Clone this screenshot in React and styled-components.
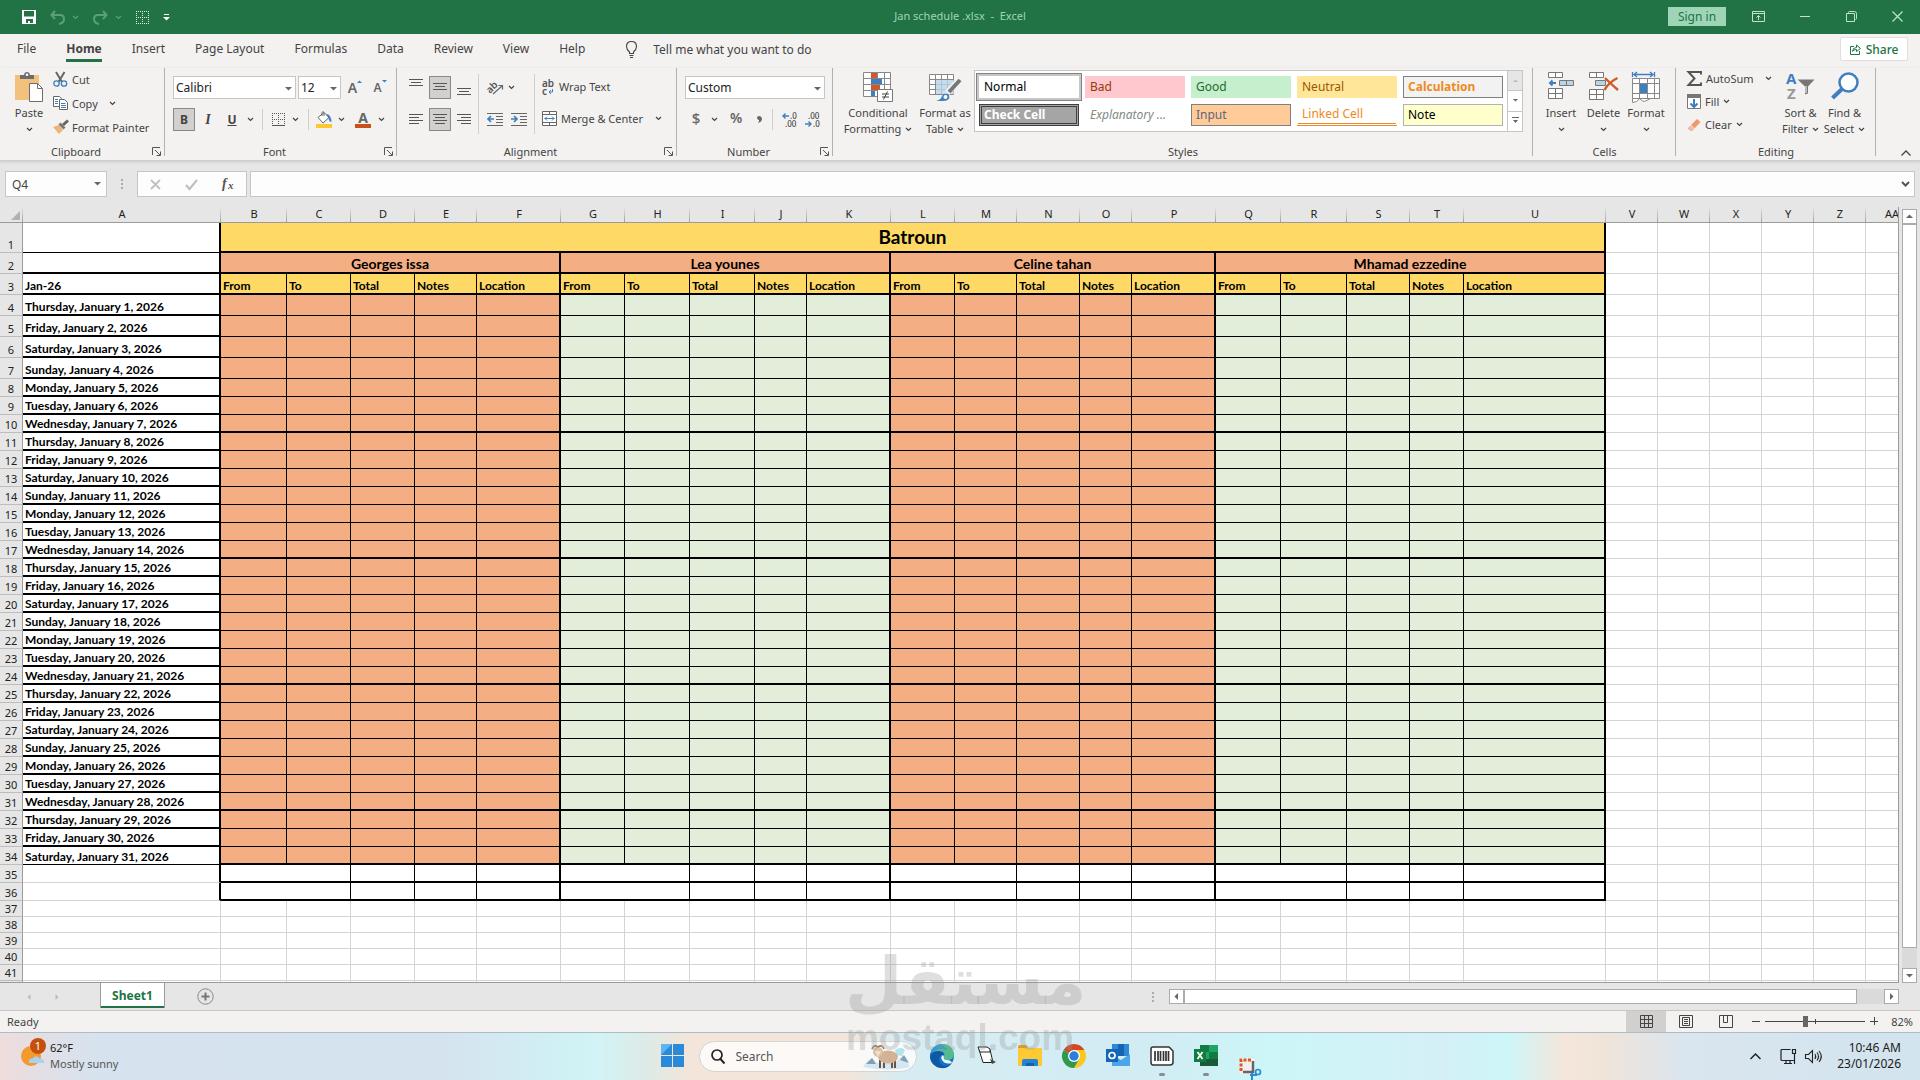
import React from "react";
import styled, { createGlobalStyle, css } from "styled-components";

const UI = '"Noto Sans", "Open Sans", sans-serif';
const CELL = 'Lato, "Noto Sans", sans-serif';
const INK = "#444";

const GlobalStyle = createGlobalStyle`
  * { box-sizing: border-box; }
  body { margin: 0; font-family: ${UI}; font-size: 11px; color: ${INK}; overflow: hidden; }
  button, input, select { font: inherit; color: inherit; }
  button { background: none; border: 0; padding: 0; }
  svg { display: block; flex: none; overflow: visible; }
`;

const Screen = styled.div`
  height: 100vh;
  display: flex;
  flex-direction: column;
  background: #e6e6e6;
`;

/* ---------- title bar ---------- */
const TitleBar = styled.header`
  height: 34px;
  flex: none;
  display: grid;
  grid-template-columns: 1fr auto 1fr;
  align-items: center;
  background: #217346;
  color: #9fd5b7;
`;
const QuickAccess = styled.div`
  display: flex;
  align-items: center;
  gap: 7px;
  padding-left: 22px;
`;
const QuickGroup = styled.div`
  display: flex;
  align-items: center;
  gap: 7px;
  margin-left: 7px;
  opacity: ${(p) => (p.$dim ? 0.45 : 1)};
`;
const DocTitle = styled.h1`
  margin: 0;
  font-size: 11px;
  font-weight: 400;
  line-height: 32px;
  white-space: pre;
  align-self: start;
`;
const WindowTools = styled.div`
  display: flex;
  align-items: center;
  justify-content: flex-end;
  gap: 35px;
  padding-right: 17px;
  align-self: start;
  height: 33px;
`;
const SignIn = styled.button`
  width: 58px;
  height: 19px;
  margin-right: -9px;
  background: #9fd5b7;
  color: #217346;
  font-size: 12px;
  line-height: 19px;
`;

/* ---------- tabs ---------- */
const TabRow = styled.nav`
  height: 34px;
  flex: none;
  display: flex;
  align-items: flex-start;
  background: #f3f2f1;
  padding: 3px 12px 0 2px;
`;
const Tab = styled.button`
  padding: 0 15px;
  font-size: 12px;
  font-weight: ${(p) => (p.$active ? 700 : 400)};
  span {
    display: block;
    height: 25px;
    line-height: 24px;
    box-shadow: ${(p) => (p.$active ? "inset 0 -3px #217346" : "none")};
  }
`;
const TellMe = styled.button`
  display: flex;
  align-items: center;
  gap: 16px;
  height: 25px;
  margin-left: 26px;
  font-size: 12px;
`;
const Share = styled.button`
  display: flex;
  align-items: center;
  justify-content: center;
  gap: 5px;
  margin-left: auto;
  width: 68px;
  height: 24px;
  background: #fff;
  border: 1px solid #e1dfdd;
  border-radius: 2px;
  color: #217346;
  font-size: 12px;
  font-weight: 500;
`;

/* ---------- ribbon ---------- */
const Ribbon = styled.section`
  flex: none;
  height: 93px;
  display: flex;
  background: #f3f2f1;
  border-bottom: 1px solid #cfcec9;
  box-shadow: 0 1px 3px rgba(0, 0, 0, 0.12);
`;
const Group = styled.div`
  display: flex;
  flex-direction: column;
  height: 92px;
  width: ${(p) => (p.$w ? p.$w + "px" : "auto")};
  flex: ${(p) => (p.$grow ? "1 1 0" : "none")};
  background: linear-gradient(#b3b1ae, #b3b1ae) right top / 1px 88px no-repeat;
`;
const GroupBody = styled.div`
  flex: 1;
  display: flex;
  padding: ${(p) => p.$pad || "0"};
  gap: ${(p) => p.$gap || 0}px;
`;
const GroupLabel = styled.div`
  height: 17px;
  display: flex;
  align-items: center;
  padding-right: ${(p) => (p.$launcher ? 4 : 0)}px;
  font-size: 11px;
  line-height: 17px;
  span { flex: 1; text-align: center; }
`;
const Stack = styled.div`
  display: flex;
  flex-direction: column;
  gap: ${(p) => p.$gap || 0}px;
  padding-top: ${(p) => p.$top || 0}px;
  margin-left: ${(p) => p.$left || 0}px;
`;
const Line = styled.div`
  display: flex;
  align-items: center;
  height: 23px;
  gap: ${(p) => p.$gap || 0}px;
`;
const SmallButton = styled.button`
  display: flex;
  align-items: center;
  height: ${(p) => p.$h || 23}px;
  padding-bottom: 2px;
  gap: 4px;
  white-space: nowrap;
  span + svg { margin-left: ${(p) => p.$arrow || 0}px; }
`;
const BigButton = styled.button`
  display: flex;
  flex-direction: column;
  align-items: center;
  width: ${(p) => p.$w}px;
  padding-top: 4px;
  line-height: 16px;
  white-space: nowrap;
`;
const BigIcon = styled.span`
  height: 33px;
  display: flex;
  align-items: flex-start;
`;
const BigLine = styled.span`
  height: 16px;
  display: flex;
  align-items: center;
  gap: 4px;
`;
const Toggle = styled.button`
  width: ${(p) => p.$w || 22}px;
  height: 23px;
  display: flex;
  align-items: center;
  justify-content: center;
  background: ${(p) => (p.$on ? "#d2d0ce" : "transparent")};
  border: 1px solid ${(p) => (p.$on ? "#8a8886" : "transparent")};
  font-size: 12px;
  font-weight: ${(p) => (p.$bold ? 700 : 400)};
`;
const Italic = styled.em`
  font: italic 700 14px/20px "Liberation Serif", serif;
`;
const Divider = styled.i`
  width: 1px;
  height: ${(p) => p.$h || 21}px;
  background: #d0cecc;
  margin: 0 ${(p) => p.$m || 0}px;
`;
const SelectWrap = styled.label`
  position: relative;
  display: block;
  width: ${(p) => p.$w}px;
  height: 23px;
  svg { position: absolute; right: 4px; top: 9px; pointer-events: none; }
`;
const Select = styled.select`
  appearance: none;
  width: 100%;
  height: 23px;
  padding: 0 14px 0 2px;
  border: 1px solid #c8c6c4;
  border-radius: 0;
  background: #fff;
  color: #222;
  font-size: 12px;
  line-height: 20px;
`;

/* ---------- style gallery ---------- */
const Gallery = styled.div`
  display: flex;
  height: 62px;
  margin-top: 2px;
  flex: none;
  border: 1px solid #c8c6c4;
  background: #fff;
`;
const GalleryGrid = styled.div`
  display: grid;
  grid-template-columns: repeat(5, 100px);
  grid-auto-rows: 22px;
  gap: 6px;
  padding: 5px 4px;
`;
const Swatch = styled.button`
  text-align: left;
  padding-left: 4px;
  font-size: 12px;
  line-height: 18px;
  white-space: nowrap;
  background: ${(p) => p.$bg || "#fff"};
  color: ${(p) => p.$fg || "#000"};
  font-weight: ${(p) => (p.$bold ? 700 : 400)};
  font-style: ${(p) => (p.$italic ? "italic" : "normal")};
  border: 1px solid ${(p) => p.$line || "transparent"};
  ${(p) => p.$selected && css`outline: 1px solid #838383; outline-offset: 2px; box-shadow: 0 0 0 2px #c6c6c6;`}
  ${(p) => p.$double && css`border: 3px double #3f3f3f; line-height: 14px; padding-left: 2px;`}
  ${(p) => p.$under && css`border-bottom: 3px double #e88a2a;`}
`;
const GalleryScroll = styled.div`
  width: 15px;
  display: flex;
  flex-direction: column;
  border-left: 1px solid #c8c6c4;
  button {
    flex: 1;
    display: flex;
    align-items: center;
    justify-content: center;
  }
  button + button { border-top: 1px solid #c8c6c4; }
  button:first-child { background: #e6e6e6; }
`;
const Collapse = styled.button`
  align-self: flex-end;
  margin: 0 9px 4px auto;
`;

/* ---------- formula bar ---------- */
const FormulaBar = styled.div`
  flex: none;
  display: flex;
  align-items: center;
  height: 46px;
  padding: 10px 5px;
`;
const NameBox = styled(SelectWrap)`
  height: 26px;
  svg { right: 6px; top: 9px; }
  input {
    width: 100%;
    height: 26px;
    border: 1px solid #c6c6c6;
    background: #fdfdfd;
    padding: 0 6px;
    font-size: 12px;
  }
`;
const Dots = styled.span`
  display: flex;
  flex-direction: column;
  gap: 2px;
  width: 2px;
  margin: ${(p) => p.$m};
  i { width: 2px; height: 2px; background: #ababab; }
`;
const FormulaTools = styled.div`
  display: flex;
  align-items: center;
  justify-content: space-between;
  width: 110px;
  height: 26px;
  padding: 0 12px;
  margin-right: 3px;
  background: #fdfdfd;
  border: 1px solid #c6c6c6;
`;
const FormulaInput = styled.label`
  flex: 1;
  height: 26px;
  display: flex;
  align-items: center;
  background: #fdfdfd;
  border: 1px solid #c6c6c6;
  padding-right: 4px;
  input { flex: 1; border: 0; background: none; height: 22px; outline: 0; }
`;

/* ---------- sheet ---------- */
const SheetArea = styled.main`
  flex: 1;
  min-height: 0;
  display: flex;
`;
const SheetView = styled.div`
  flex: 1;
  min-width: 0;
  overflow: hidden;
  border-right: 1px solid #9b9b9b;
  border-bottom: 1px solid #9b9b9b;
  background: #fff;
`;
const Sheet = styled.table`
  table-layout: fixed;
  border-collapse: separate;
  border-spacing: 0;
  width: 1918px;
  font-family: ${CELL};
  font-size: 12px;
  color: #000;
  th, td { padding: 0; overflow: hidden; white-space: nowrap; }
`;
const ColHead = styled.th`
  height: 16px;
  font: 400 11px/14px ${UI};
  color: #222;
  vertical-align: top;
  background: linear-gradient(#e6e6e6, #a0a0a0) right / 1px 100% no-repeat, #e6e6e6;
  border-bottom: 1px solid #9b9b9b;
`;
const Corner = styled(ColHead)`
  svg { margin: 4px 3px 0 auto; }
`;
const RowHead = styled.th`
  height: ${(p) => p.$h}px;
  font: 400 11px/15px ${UI};
  color: #222;
  vertical-align: bottom;
  background: #e6e6e6;
  border-right: 1px solid #9b9b9b;
  border-bottom: 1px solid #bdbdbd;
`;
const lineOf = (v) => (v === 2 ? "2px solid #000" : v === 1 ? "1px solid #000" : "1px solid #d4d4d4");
const Cell = styled.td`
  background: ${(p) => p.$bg || "#fff"};
  border-right: ${(p) => lineOf(p.$r)};
  border-bottom: ${(p) => lineOf(p.$b)};
  text-align: ${(p) => (p.$center ? "center" : "left")};
  vertical-align: ${(p) => (p.$middle ? "middle" : "bottom")};
  font-size: ${(p) => p.$size || 12}px;
  line-height: ${(p) => (p.$size > 14 ? 24 : p.$size ? 17 : 15)}px;
  font-weight: 700;
  && { padding-left: ${(p) => (p.$center ? 0 : 2)}px; }
`;

const VScroll = styled.div`
  width: 15px;
  margin: 2px 3px 0;
  display: flex;
  flex-direction: column;
  background: #dadada;
`;
const ScrollBtn = styled.button`
  width: 15px;
  height: 15px;
  flex: none;
  display: flex;
  align-items: center;
  justify-content: center;
  background: #fff;
  border: 1px solid #ababab;
`;
const VThumb = styled.div`
  flex: 1;
  margin-bottom: 20px;
  background: #fff;
  border: 1px solid #ababab;
`;

/* ---------- sheet tabs ---------- */
const SheetTabs = styled.div`
  flex: none;
  height: 27px;
  display: flex;
  align-items: center;
  padding-right: 21px;
`;
const Arrows = styled.div`
  display: flex;
  gap: 22px;
  width: 100px;
  padding-left: 26px;
`;
const SheetTab = styled.button`
  align-self: flex-start;
  width: 65px;
  height: 25px;
  background: #fff;
  border: solid #9b9b9b;
  border-width: 0 1px;
  box-shadow: inset 0 -2px #217346;
  color: #217346;
  font-size: 12px;
  font-weight: 700;
`;
const AddSheet = styled.button`
  margin-left: 32px;
`;
const HScroll = styled.div`
  display: flex;
  width: 730px;
  height: 15px;
  background: #dadada;
`;
const HThumb = styled.div`
  flex: 1;
  margin-right: 27px;
  background: #fff;
  border: 1px solid #ababab;
`;

/* ---------- status bar ---------- */
const StatusBar = styled.footer`
  flex: none;
  height: 22px;
  display: flex;
  align-items: center;
  background: #f3f2f1;
  border-top: 1px solid #c6c6c6;
  padding: 0 7px;
`;
const ViewBtn = styled.button`
  width: 40px;
  height: 21px;
  display: flex;
  align-items: center;
  justify-content: center;
  background: ${(p) => (p.$on ? "#d2d0ce" : "none")};
`;
const Spacer = styled.div`
  flex: 1;
`;
const Zoom = styled.input`
  appearance: none;
  width: 100px;
  height: 13px;
  margin: 0 5px;
  background:
    linear-gradient(${INK}, ${INK}) center / 1px 5px no-repeat,
    linear-gradient(${INK}, ${INK}) center / 100% 1px no-repeat;
  &::-webkit-slider-thumb {
    appearance: none;
    width: 5px;
    height: 11px;
    background: #666;
  }
`;
const ZoomValue = styled.output`
  width: 34px;
  text-align: right;
`;

/* ---------- taskbar ---------- */
const Taskbar = styled.footer`
  flex: none;
  height: 48px;
  display: grid;
  grid-template-columns: 1fr auto 1fr;
  border-top: 1px solid #aebcc4;
  color: #1b1b1b;
  background: linear-gradient(90deg, #f0dcdc 0, #e3dfe4 2%, #d6e3ee 5%, #d5e3ee 23%, #d0f0f4 29%, #d2f4f6 31%, #dcebe8 33.5%, #f3e5d9 36%, #f3e5d9 44%, #d6ecf2 47%, #d2ecf4 60%, #ccf6f8 66%, #d4f0f6 75%, #cdf6f9 78.5%, #f4e6da 81.5%, #f0e4da 83.5%, #d9e5ef 88%, #d2e4ee 100%);
`;
const Weather = styled.button`
  display: flex;
  align-items: flex-start;
  justify-self: start;
  gap: 3px;
  padding: 5px 0 0 20px;
  text-align: left;
  line-height: 16px;
  span { padding-top: 2px; }
  small { display: block; font-size: 11px; color: #555; }
`;
const Dock = styled.div`
  display: flex;
  align-items: flex-start;
  padding-left: 2px;
`;
const DockItem = styled.button`
  width: 44px;
  height: 47px;
  display: flex;
  flex-direction: column;
  align-items: center;
  padding-top: ${(p) => (p.$low ? 24 : 11)}px;
  gap: 5px;
  overflow: hidden;
  &::after {
    content: "";
    width: 6px;
    height: 3px;
    border-radius: 2px;
    background: ${(p) => (p.$running ? "#868c90" : "transparent")};
  }
`;
const SearchBox = styled.label`
  display: flex;
  align-items: center;
  gap: 11px;
  width: 218px;
  height: 31px;
  margin: 8px 3px 0 4px;
  padding: 0 6px 0 11px;
  border: 1px solid #d5d5d2;
  border-radius: 16px;
  background: rgba(255, 255, 255, 0.75);
  input {
    width: 0;
    flex: 1;
    border: 0;
    padding: 0;
    background: none;
    outline: 0;
    font-size: 12px;
    &::placeholder { color: #555; opacity: 1; }
  }
`;
const Tray = styled.div`
  display: flex;
  align-items: center;
  justify-content: flex-end;
  padding: 0 19px 1px 0;
`;
const Clock = styled.time`
  width: 79px;
  text-align: right;
  line-height: 16px;
  font-size: 12px;
`;
const TrayIcons = styled.div`
  display: flex;
  align-items: center;
  gap: 8px;
  margin-left: 19px;
`;

const Watermark = styled.div`
  position: fixed;
  left: 50%;
  bottom: 24px;
  width: 230px;
  margin-left: -115px;
  color: rgba(150, 150, 150, 0.3);
  pointer-events: none;
  text-align: center;
  white-space: nowrap;
  div:first-child { font: 700 66px/76px "DejaVu Sans", sans-serif; }
  div:last-child { font: 700 37px/36px "Liberation Sans", sans-serif; }
`;

/* ---------- small drawings ---------- */
const Svg = ({ w, h = w, children, ...rest }) => (
  <svg width={w} height={h} viewBox={`0 0 ${w} ${h}`} fill="none" stroke="none" aria-hidden="true" {...rest}>
    {children}
  </svg>
);
const Chev = ({ c = INK, big }) =>
  big ? (
    <Svg w={9} h={6}><path d="M1 1l3.500 3.500L8 1" stroke="#555" strokeWidth="2" /></Svg>
  ) : (
    <Svg w={7} h={5}><path d="M1 1l2.500 2.500L6 1" stroke={c} strokeWidth="1.200" /></Svg>
  );
const Caret = ({ dir = "down", c = "#666", w = 7 }) => {
  const rot = { down: 0, up: 180, left: 90, right: -90 }[dir];
  return <Svg w={w}><path transform={`rotate(${rot} ${w / 2} ${w / 2})`} d={`M0 ${w / 2 - 1.5}h${w}l-${w / 2} ${w / 2}z`} fill={c} /></Svg>;
};
const Launcher = () => (
  <Svg w={9}><path d="M8 .5H.5V8M3 3l5 5M8.500 4.500v4h-4" stroke="#555" /></Svg>
);
const lines = (ys, xs, w) => ys.map((y, i) => <path key={y} d={`M${xs[i]} ${y + 0.5}h${w[i]}`} stroke="#555" />);
const VAlign = ({ pos }) => (
  <Svg w={14} h={17}>{lines([[0, 3, 6], [4, 7, 10], [9, 12, 15]][pos], [0, 2, 0], [14, 10, 14])}</Svg>
);
const HAlign = ({ k }) => (
  <Svg w={14} h={11}>{lines([0, 3, 6, 9], k === 0 ? [0, 0, 0, 0] : k === 1 ? [0, 2, 0, 2] : [0, 4, 0, 4], [14, 10, 14, 10])}</Svg>
);
const Indent = ({ out }) => (
  <Svg w={16} h={13}>
    <path d="M0 .5h16M9 3.500h7M9 6.500h7M9 9.500h7M0 12.500h16" stroke="#666" />
    <path d={out ? "M7 6H1.500M4 3L1 6l3 3" : "M0 6h6M3 3l3 3-3 3"} stroke="#3f7fbf" strokeWidth="1.700" />
  </Svg>
);
const Scissors = () => (
  <Svg w={15}>
    <path d="M3 0l6 10M11.500 0L5.500 10" stroke="#666" strokeWidth="2" />
    <circle cx="3.500" cy="11.500" r="2.700" stroke="#3f7fbf" strokeWidth="1.300" />
    <circle cx="11" cy="11.500" r="2.700" stroke="#3f7fbf" strokeWidth="1.300" />
  </Svg>
);
const CopyIcon = () => (
  <Svg w={15} h={14}>
    <path d="M.5.5h6l2 2v8h-8z" fill="#fff" stroke="#666" />
    <path d="M6.500 3.500h5l3 3v7h-8z" fill="#fff" stroke="#666" />
    <path d="M2 3.500h3M2 5.500h3M2 7.500h3M8 7.500h4.500M8 9.500h5M8 11.500h5" stroke="#3f7fbf" />
  </Svg>
);
const Painter = () => (
  <Svg w={15} h={14}>
    <path d="M0 7l6-2 4 5-4 4z" fill="#f2b27c" />
    <path d="M5.500 4.500l5 5 2-2-5-5z" fill="#777" />
    <path d="M10 5l5-4.500" stroke="#666" strokeWidth="3" />
  </Svg>
);
const PasteIcon = () => (
  <Svg w={28} h={30}>
    <path d="M0 3h24v25H0z" fill="#f2c27c" />
    <path d="M5 7V3h4c0-4 6-4 6 0h4v4z" fill="#6d6d6d" /><circle cx="12" cy="2.800" r="1.300" fill="#fff" />
    <path d="M14.500 11.500h8l5 5v13h-13z" fill="#fff" stroke="#6d6d6d" />
    <path d="M22.500 11.500v5h5" stroke="#6d6d6d" />
  </Svg>
);
const BordersIcon = ({ c = "#555", solid }) => (
  <Svg w={13}>
    <path d="M.5 0v13M6.500 0v13M12.500 0v13M0 .5h13M0 6.500h13M0 12.500h13" stroke={c} strokeDasharray="1 1" />
    {solid && <path d="M0 12.500h13" stroke={c} />}
  </Svg>
);
const FillIcon = () => (
  <Svg w={16} h={17}>
    <path d="M2 6.500L8 1.500l5 5-6 5.500z" fill="#fff" stroke="#666" /><path d="M6 5V1.500q1-2 2 0V5" stroke="#666" />
    <path d="M10 3q5 0 5.500 8Q13 11 12.500 7z" fill="#3f7fbf" />
    <path d="M0 13h16v4H0z" fill="#fdc830" />
  </Svg>
);
const GlyphBox = styled.span`
  display: flex;
  flex-direction: column;
  align-items: center;
  width: 16px;
  height: 17px;
  font: ${(p) => p.$weight || 700} ${(p) => p.$s || 14}px/14px ${UI};
  color: #666;
  border-bottom: ${(p) => (p.$bar ? `4px solid ${p.$bar}` : 0)};
`;
const SizeIcon = styled.span`
  display: flex;
  font-size: ${(p) => (p.$big ? 14 : 12)}px;
  line-height: 23px;
  font-weight: 600;
  color: #666;
  svg { margin-top: 3px; }
`;
const Comma = () => (
  <Svg w={5} h={7}><path d="M0 1.500Q0 0 2.300 0T5 2.500Q5 6 1 7 2.500 5 2 4 0 3.800 0 1.500z" fill="#666" /></Svg>
);
const Orient = () => (
  <Svg w={17} h={15}>
    <text x="0" y="11" fontSize="10" fontWeight="600" fill="#555" transform="rotate(-45 5 9)" fontFamily="Noto Sans">ab</text>
    <path d="M6 14l9-8M11.500 5.500H15.500V9.500" stroke="#666" strokeWidth="1.200" />
  </Svg>
);
const WrapIcon = () => (
  <Svg w={13} h={16}>
    <text x="0" y="8" fontSize="10" fontWeight="600" fill="#555" fontFamily="Noto Sans">ab</text>
    <text x="0" y="16" fontSize="10" fontWeight="600" fill="#555" fontFamily="Noto Sans">c</text>
    <path d="M10.500 10v3H7M9 11l-2 2 2 2" stroke="#3f7fbf" />
  </Svg>
);
const MergeIcon = () => (
  <Svg w={15}>
    <path d="M.5.5h14v14H.5zM.5 3.500h14M.5 11.500h14M7.500 0v3M7.500 12v3" fill="#fff" stroke="#666" />
    <path d="M2.500 7.500h10M5 5.500l-2 2 2 2M10 5.500l2 2-2 2" stroke="#3f7fbf" />
  </Svg>
);
const Decimals = ({ more }) => (
  <Svg w={15} h={14}>
    <text x={more ? 8 : 3} y="6" fontSize="8" fontWeight="500" fill="#444" fontFamily="Noto Sans">{more ? ".0" : ".00"}</text>
    <text x={more ? 3 : 8} y="14" fontSize="8" fontWeight="500" fill="#444" fontFamily="Noto Sans">{more ? ".00" : ".0"}</text>
    <path d={more ? "M7 3H1M3.500 .5L1 3l2.500 2.500" : "M0 11h6M3.500 8.500L6 11l-2.500 2.500"} stroke="#3f7fbf" strokeWidth="1.400" />
  </Svg>
);
const CondIcon = () => (
  <Svg w={30}>
    <path d="M.5.5h27v24H.5zM.5 6.500h27M.5 12.500h27M.5 18.500h27M8.500 0v24M14.500 0v24M21.500 0v24" fill="#fff" stroke="#888" />
    <path d="M8 1h6v5H8zM8 13h9v5H8z" fill="#d0582a" />
    <path d="M8 7h11v5H8zM8 19h4v5H8z" fill="#3f7fbf" />
    <path d="M14.500 17.500h15v12h-15z" fill="#fff" stroke="#777" />
    <path d="M19 22h7M19 25h7M24.500 19.500l-4 8" stroke="#444" />
  </Svg>
);
const TableIcon = () => (
  <Svg w={32} h={30}>
    <path d="M.5 2.500h24v20H.5zM.5 7.500h24M.5 12.500h24M.5 17.500h24M6.500 2v20M12.500 2v20M18.500 2v20" fill="#fff" stroke="#888" />
    <path d="M7 8h18v14H7z" fill="#b8d4e8" opacity=".8" />
    <path d="M31 7L18 21" stroke="#f3f2f1" strokeWidth="6" />
    <path d="M31 8L20 20" stroke="#777" strokeWidth="4" />
    <path d="M7 29q5-1 6-5 3-4 7-1 2 6-7 6z" fill="#3f7fbf" /><circle cx="16.500" cy="25" r="2" fill="#fff" />
  </Svg>
);
const CellRow = ({ y }) => <path d={`M.5 ${y}.5h14v${y ? 10 : 5}H.5zM7.500 ${y}.5v${y ? 10 : 5}${y ? `M.5 ${y + 5}.5h14` : ""}`} fill="#fff" stroke="#777" />;
const InsertIcon = () => (
  <Svg w={26} h={28}>
    <CellRow y={0} /><CellRow y={16} />
    <path d="M11.500 8.500h14v5h-14zM18.500 8.500v5" fill="#b8d4e8" stroke="#777" />
    <path d="M8 11H2M4.500 8.500L2 11l2.500 2.500" stroke="#3f7fbf" strokeWidth="2" />
  </Svg>
);
const DeleteIcon = () => (
  <Svg w={29} h={28}>
    <CellRow y={0} /><CellRow y={17} />
    <path d="M6.500 8.500h10v5h-10z" fill="#b8d4e8" stroke="#777" />
    <path d="M16 6q5 5 13 12M28.500 6Q20 10 15.500 18" stroke="#d0582a" strokeWidth="2.400" />
  </Svg>
);
const FormatIcon = () => (
  <Svg w={29} h={31}>
    <path d="M.5 0v5M22.500 0v5M2 2.500h19M5 0L2 2.500 5 5M18 0l3 2.500L18 5" stroke="#3f7fbf" strokeWidth="1.300" />
    <path d="M.5 6.500h27v20H.5zM.5 11.500h27M.5 21.500h27M7.500 6v20M15.500 6v20M22.500 6v20M.5 26.500v4q5 0 7-4 3 3 5 3l6-3" fill="#fff" stroke="#888" />
    <path d="M8 12h7v9H8z" fill="#3f7fbf" />
  </Svg>
);
const SumIcon = () => (
  <Svg w={15}><path d="M14 3.500V1H1.500l6 6.500-6 6.500H14v-2.500" stroke="#555" strokeWidth="2" /></Svg>
);
const FillDown = () => (
  <Svg w={14} h={15}><path d="M.5.5h13v14H.5z" fill="#fff" stroke="#777" /><path d="M0 0h14v4H0z" fill="#777" /><path d="M7 5v8M3.500 9.500L7 13l3.500-3.500" stroke="#3f7fbf" strokeWidth="2" /></Svg>
);
const Eraser = () => (
  <Svg w={14}><path d="M4 7l6-6 3.500 3L7.500 10.500z" fill="#ef9a6c" /><path d="M1 10.500L3.500 8l3 3-2 2z" fill="#f7b8b0" stroke="#e7937c" strokeWidth=".6" /></Svg>
);
const SortIcon = () => (
  <Svg w={29} h={28}>
    <text x="0" y="12" fontSize="15" fontWeight="700" fill="#3f7fbf" fontFamily="Noto Sans">A</text>
    <text x="1" y="27" fontSize="15" fontWeight="700" fill="#999" fontFamily="Noto Sans">Z</text>
    <path d="M11.500 7.500h17l-6.500 7v7l-3 1v-8z" fill="#777" /><path d="M20 14v7" stroke="#fff" />
  </Svg>
);
const FindIcon = () => (
  <Svg w={28}><circle cx="17.500" cy="10.500" r="9" fill="#fdfdfd" stroke="#3f7fbf" strokeWidth="2.500" /><path d="M11 17l-9.500 9" stroke="#3f7fbf" strokeWidth="4" /></Svg>
);

/* ---------- ribbon parts ---------- */
const Big = ({ icon, l1, l2, w }) => (
  <BigButton $w={w}>
    <BigIcon>{icon}</BigIcon>
    <BigLine>{l1}</BigLine>
    <BigLine>{l2}<Chev /></BigLine>
  </BigButton>
);
const Label = ({ children, launcher }) => (
  <GroupLabel $launcher={launcher}>
    <span>{children}</span>
    {launcher && <button aria-label={`${children} settings`}><Launcher /></button>}
  </GroupLabel>
);
const Picker = ({ w, label, value }) => (
  <SelectWrap $w={w}>
    <Select aria-label={label} defaultValue={value}><option>{value}</option></Select>
    <Caret w={7} />
  </SelectWrap>
);

const swatches = [
  { t: "Normal", selected: true },
  { t: "Bad", bg: "#ffc7ce", fg: "#9c3a06" },
  { t: "Good", bg: "#c6efce", fg: "#1e6b2a" },
  { t: "Neutral", bg: "#ffe699", fg: "#9c5700" },
  { t: "Calculation", bg: "#f2f2f2", fg: "#ee8a22", bold: true, line: "#7f7f7f" },
  { t: "Check Cell", bg: "#a5a5a5", fg: "#fff", bold: true, double: true },
  { t: "Explanatory ...", fg: "#7f8a86", italic: true },
  { t: "Input", bg: "#ffcc99", fg: "#5f6480", line: "#7f7f7f" },
  { t: "Linked Cell", fg: "#ee8a22", under: true },
  { t: "Note", bg: "#ffffcc", line: "#b2b2b2" },
];

const RibbonBar = () => (
  <Ribbon>
    <Group $w={165}>
      <GroupBody $pad="0 0 0 6px">
        <BigButton $w={46}>
          <BigIcon><PasteIcon /></BigIcon>
          <BigLine>Paste</BigLine>
          <BigLine><Chev /></BigLine>
        </BigButton>
        <Stack $left={1}>
          <SmallButton $h={24}><Scissors /><span>Cut</span></SmallButton>
          <SmallButton $h={24} $arrow={7}><CopyIcon /><span>Copy</span><Chev /></SmallButton>
          <SmallButton $h={24}><Painter /><span>Format Painter</span></SmallButton>
        </Stack>
      </GroupBody>
      <Label launcher>Clipboard</Label>
    </Group>

    <Group $w={232}>
      <GroupBody $pad="0 0 0 8px">
        <Stack $gap={9} $top={8}>
          <Line $gap={2}>
            <Picker w={123} label="Font" value="Calibri" />
            <Picker w={43} label="Font size" value="12" />
            <Toggle $w={24} aria-label="Grow font"><SizeIcon $big>A<Caret w={5} dir="up" c="#3f7fbf" /></SizeIcon></Toggle>
            <Toggle $w={22} aria-label="Shrink font"><SizeIcon>A<Caret w={5} c="#3f7fbf" /></SizeIcon></Toggle>
          </Line>
          <Line>
            <Toggle $on $bold>B</Toggle>
            <Toggle $w={26}><Italic>I</Italic></Toggle>
            <Toggle $bold><u>U</u></Toggle>
            <Toggle $w={14} aria-label="Underline styles"><Chev /></Toggle>
            <Divider $m={5} />
            <Toggle $w={20} aria-label="Borders"><BordersIcon solid /></Toggle>
            <Toggle $w={15} aria-label="Border styles"><Chev /></Toggle>
            <Divider $m={5} />
            <Toggle $w={20} aria-label="Fill color"><FillIcon /></Toggle>
            <Toggle $w={15} aria-label="Fill colors"><Chev /></Toggle>
            <Toggle $w={28}><GlyphBox $bar="#c8501a">A</GlyphBox></Toggle>
            <Toggle $w={8} aria-label="Font colors"><Chev /></Toggle>
          </Line>
        </Stack>
      </GroupBody>
      <Label launcher>Font</Label>
    </Group>

    <Group $w={280}>
      <GroupBody $pad="0 0 0 8px">
        <Stack $gap={9} $top={8}>
          <Line $gap={2}>
            <Toggle aria-label="Top align"><VAlign pos={0} /></Toggle>
            <Toggle $on aria-label="Middle align"><VAlign pos={1} /></Toggle>
            <Toggle aria-label="Bottom align"><VAlign pos={2} /></Toggle>
          </Line>
          <Line $gap={2}>
            <Toggle aria-label="Align left"><HAlign k={0} /></Toggle>
            <Toggle $on aria-label="Center"><HAlign k={1} /></Toggle>
            <Toggle aria-label="Align right"><HAlign k={2} /></Toggle>
          </Line>
        </Stack>
        <Stack $top={6} $left={3}><Divider $h={60} /></Stack>
        <Stack $gap={9} $top={8} $left={5}>
          <Line><Toggle $w={22} aria-label="Orientation"><Orient /></Toggle><Toggle $w={10} aria-label="Orientation options"><Chev /></Toggle></Line>
          <Line $gap={2}><Toggle aria-label="Decrease indent"><Indent out /></Toggle><Toggle aria-label="Increase indent"><Indent /></Toggle></Line>
        </Stack>
        <Stack $top={6} $left={4}><Divider $h={60} /></Stack>
        <Stack $gap={9} $top={8} $left={7}>
          <SmallButton><WrapIcon /><span>Wrap Text</span></SmallButton>
          <SmallButton $arrow={8}><MergeIcon /><span>Merge &amp; Center</span><Chev /></SmallButton>
        </Stack>
      </GroupBody>
      <Label launcher>Alignment</Label>
    </Group>

    <Group $w={156}>
      <GroupBody $pad="0 0 0 8px">
        <Stack $gap={9} $top={8}>
          <Picker w={140} label="Number format" value="Custom" />
          <Line>
            <Toggle $w={22}><GlyphBox $s={15} $weight={500}>$</GlyphBox></Toggle>
            <Toggle $w={14} aria-label="Currencies"><Chev /></Toggle>
            <Toggle $w={30}><GlyphBox $s={14} $weight={600}>%</GlyphBox></Toggle>
            <Toggle $w={16} aria-label="Comma style"><Comma /></Toggle>
            <Divider $m={5} />
            <Toggle aria-label="Increase decimal"><Decimals more /></Toggle>
            <Toggle $w={24} aria-label="Decrease decimal"><Decimals /></Toggle>
          </Line>
        </Stack>
      </GroupBody>
      <Label launcher>Number</Label>
    </Group>

    <Group $grow>
      <GroupBody $pad="0 0 0 7px">
        <Big w={76} icon={<CondIcon />} l1="Conditional" l2="Formatting" />
        <Big w={58} icon={<TableIcon />} l1="Format as" l2="Table" />
        <Gallery>
          <GalleryGrid>
            {swatches.map(({ t, ...s }) => (
              <Swatch key={t} $bg={s.bg} $fg={s.fg} $bold={s.bold} $italic={s.italic} $line={s.line} $selected={s.selected} $double={s.double} $under={s.under}>{t}</Swatch>
            ))}
          </GalleryGrid>
          <GalleryScroll>
            <button aria-label="Previous styles"><Caret w={5} dir="up" c="#bbb" /></button>
            <button aria-label="Next styles"><Caret w={5} /></button>
            <button aria-label="More styles"><Svg w={7} h={8}><path d="M0 .5h7" stroke="#666" /><path d="M1 3h5L3.500 6z" fill="#666" /></Svg></button>
          </GalleryScroll>
        </Gallery>
      </GroupBody>
      <Label>Styles</Label>
    </Group>

    <Group $w={143}>
      <GroupBody $pad="0 0 0 7px">
        <Big w={42} icon={<InsertIcon />} l1="Insert" />
        <Big w={43} icon={<DeleteIcon />} l1="Delete" />
        <Big w={42} icon={<FormatIcon />} l1="Format" />
      </GroupBody>
      <Label>Cells</Label>
    </Group>

    <Group $w={200}>
      <GroupBody $pad="0 0 0 11px">
        <Stack>
          <SmallButton $arrow={7}><SumIcon /><span>AutoSum</span><Chev /></SmallButton>
          <SmallButton><FillDown /><span>Fill</span><Chev /></SmallButton>
          <SmallButton><Eraser /><span>Clear</span><Chev /></SmallButton>
        </Stack>
        <Spacer />
        <Big w={45} icon={<SortIcon />} l1="Sort &" l2="Filter" />
        <Big w={43} icon={<FindIcon />} l1="Find &" l2="Select" />
        <Stack $left={10} />
      </GroupBody>
      <Label>Editing</Label>
    </Group>
    <Stack $left={25} />
    <Collapse aria-label="Collapse the ribbon"><Svg w={10} h={6}><path d="M.5 5.500L5 1l4.500 4.500" stroke="#444" strokeWidth="1.300" /></Svg></Collapse>
  </Ribbon>
);

/* ---------- sheet data ---------- */
const columns = [
  ["A", 198], ["B", 66], ["C", 64], ["D", 64], ["E", 62], ["F", 84],
  ["G", 64], ["H", 65], ["I", 65], ["J", 52], ["K", 84],
  ["L", 64], ["M", 62], ["N", 63], ["O", 52], ["P", 84],
  ["Q", 65], ["R", 66], ["S", 63], ["T", 54], ["U", 142],
  ["V", 52], ["W", 52], ["X", 52], ["Y", 52], ["Z", 52], ["AA", 52],
];
const people = ["Georges issa", "Lea younes", "Celine tahan", "Mhamad ezzedine"];
const fields = ["From", "To", "Total", "Notes", "Location"];
const days = ["Thursday", "Friday", "Saturday", "Sunday", "Monday", "Tuesday", "Wednesday"];
const ORANGE = "#f4ae84";
const GREEN = "#e2eeda";
const YELLOW = "#ffd966";
const tail = () => [0, 1, 2, 3, 4, 5].map((i) => <Cell key={"t" + i} />);
const head = (n, h) => <RowHead scope="row" $h={h}>{n}</RowHead>;
const edge = (i) => (i % 5 === 4 ? 2 : 1);

const SheetGrid = () => (
  <Sheet>
    <colgroup>
      <col style={{ width: 23 }} />
      {columns.map(([c, w]) => <col key={c} style={{ width: w }} />)}
    </colgroup>
    <thead>
      <tr>
        <Corner aria-label="Select all"><Svg w={9} h={9}><path d="M9 0v9H0z" fill="#b1b1b1" /></Svg></Corner>
        {columns.map(([c]) => <ColHead key={c} scope="col">{c}</ColHead>)}
      </tr>
    </thead>
    <tbody>
      <tr>
        {head(1, 30)}
        <Cell $r={2} $b={1} />
        <Cell colSpan={20} $r={2} $b={2} $bg={YELLOW} $center $middle $size={19}>Batroun</Cell>
        {tail()}
      </tr>
      <tr>
        {head(2, 21)}
        <Cell $r={2} $b={2} />
        {people.map((p) => <Cell key={p} colSpan={5} $r={2} $b={2} $bg={ORANGE} $center $size={14}>{p}</Cell>)}
        {tail()}
      </tr>
      <tr>
        {head(3, 21)}
        <Cell $r={2} $b={2}>Jan-26</Cell>
        {Array.from({ length: 20 }, (_, i) => <Cell key={i} $r={edge(i)} $b={2} $bg={YELLOW}>{fields[i % 5]}</Cell>)}
        {tail()}
      </tr>
      {Array.from({ length: 31 }, (_, d) => (
        <tr key={d}>
          {head(d + 4, d < 4 ? 21 : 18)}
          <Cell $r={2} $b={d === 30 ? 1 : 2}>{`${days[d % 7]}, January ${d + 1}, 2026`}</Cell>
          {Array.from({ length: 20 }, (_, i) => (
            <Cell key={i} $r={edge(i)} $b={d % 7 === 6 || d === 30 ? 2 : 1} $bg={Math.floor(i / 5) % 2 ? GREEN : ORANGE} />
          ))}
          {tail()}
        </tr>
      ))}
      {[35, 36].map((n) => (
        <tr key={n}>
          {head(n, 18)}
          <Cell $r={2} />
          {people.map((p) => (
            <React.Fragment key={p}>
              <Cell colSpan={2} $r={1} $b={2} />
              <Cell $r={1} $b={2} />
              <Cell $r={1} $b={2} />
              <Cell $r={2} $b={2} />
            </React.Fragment>
          ))}
          {tail()}
        </tr>
      ))}
      {[37, 38, 39, 40, 41, 42].map((n) => (
        <tr key={n}>
          {head(n, 16)}
          {columns.map(([c]) => <Cell key={c} />)}
        </tr>
      ))}
    </tbody>
  </Sheet>
);

/* ---------- taskbar icons ---------- */
const WinLogo = () => <Svg w={23}><path d="M0 0h11v11H0zM12 0h11v11H12zM0 12h11v11H0zM12 12h11v11H12z" fill="#2b8ad8" /><path d="M0 0h11L0 11z" fill="#62b4f0" /></Svg>;
const Sheep = () => (
  <Svg w={47} h={24}>
    <path d="M0 22q4-7 9-9l5 5 20-2 6-6 7 12q-20 5-47 0z" fill="#d4e6f0" />
    <path d="M3 19l6-6 4 6zM37 15l4-5 5 8z" fill="#7f9fb4" />
    <path d="M32 5q6-4 10 0l-3 6-6-1z" fill="#b4e2ee" />
    <path d="M17 15v8M21 15v8M29 15v8M32 15v8" stroke="#6d5546" strokeWidth="2" />
    <ellipse cx="25" cy="12" rx="10" ry="6.500" fill="#d3b295" />
    <circle cx="15" cy="7" r="5" fill="#dcc1a4" /><path d="M9 4q2-5 6-2 4-3 6 2" stroke="#9d7a5c" strokeWidth="1.500" />
    <path d="M12 6h6l-3 6z" fill="#f1dfcd" />
  </Svg>
);
const Edge = () => (
  <Svg w={24}>
    <circle cx="12" cy="12" r="12" fill="#1673c4" />
    <path d="M1 9Q4 0 13 0q10 1 11 10 0 6-7 6-4 0-3-3 2-6-5-6-5 0-8 2z" fill="#54bb8c" />
    <path d="M0 13q2-6 9-6 4 1 5 4-4-1-5 4 0 6 6 7 4 0 7-3-4 6-11 5Q1 22 0 13z" fill="#0f58a6" />
    <path d="M13 11q-3 2-1 5 3 5 10 3-1-3-5-3-4 0-3-3z" fill="#e8f5fb" />
    <path d="M1 9Q3 3 9 1q6 0 8 5-8-3-16 3z" fill="#2f9be0" />
  </Svg>
);
const Papers = () => <Svg w={20} h={24}><path d="M3 5.500h11l3 13H7z" fill="#fff" stroke="#222" /><path d="M2 3h9l3 2v3H4z" fill="#fff" stroke="#222" /><path d="M14 15l6 3-4 2z" fill="#444" /></Svg>;
const Folder = () => (
  <Svg w={24}><path d="M0 3q0-2 2-2h6l2 3H0z" fill="#e59c1c" /><path d="M0 4h24v18H0z" fill="#fdc935" /><path d="M4 22v-5q0-2 2-2h12q2 0 2 2v5z" fill="#2384d4" /><path d="M8 19h8v3H8z" fill="#1362a6" /></Svg>
);
const Chrome = () => (
  <Svg w={24}>
    <path d="M12 12L1.600 6A12 12 0 0 1 22.400 6z" fill="#d24726" />
    <path d="M12 6h10.400A12 12 0 0 1 12 24l5-9z" fill="#fbc81d" />
    <path d="M1.600 6A12 12 0 0 0 12 24l5.200-9L12 12z" fill="#2f9a4c" />
    <circle cx="12" cy="12" r="6" fill="#fff" /><circle cx="12" cy="12" r="4.700" fill="#2b7de0" />
  </Svg>
);
const Outlook = () => (
  <Svg w={24}><path d="M6 0h17v12H6z" fill="#2b8ad8" /><path d="M12 0h6v12h-6z" fill="#1565b0" /><path d="M6 11l9 5 9-6v12H6z" fill="#4aa5ea" /><path d="M0 5h12v13H0z" fill="#1267b8" /><circle cx="6" cy="11.500" r="3" stroke="#fff" strokeWidth="1.700" /></Svg>
);
const Barcode = () => (
  <Svg w={24}><path d="M3 3h16l4 4v11q0 3-3 3H3q-2 0-2-3V5q0-2 2-2z" fill="#fff" stroke="#333" strokeWidth="1.500" /><path d="M5 7v10M8 7v10M10.500 7v10M13.500 7v10M16 7v10M18.500 7v10" stroke="#333" strokeWidth="1.700" /></Svg>
);
const Excel = () => (
  <Svg w={24}><path d="M6 1h18v21H6z" fill="#21a366" /><path d="M6 1h9v7H6zM15 8h9v7h-9z" fill="#107c41" /><path d="M6 15h18v7H6z" fill="#185c37" /><path d="M0 5h12v13H0z" fill="#107c41" /><path d="M3.500 8l5 7M8.500 8l-5 7" stroke="#fff" strokeWidth="1.800" /></Svg>
);
const Snip = () => (
  <Svg w={24}><rect x="1" y="1" width="16" height="16" rx="3" fill="#f3efec" /><path d="M3 14V3h11" stroke="#d85a28" strokeWidth="3" strokeDasharray="3 1.500" /><path d="M15 4v11H5" stroke="#666" strokeWidth="2.500" /><path d="M12 18h7M14 16v8" stroke="#2b8ad8" strokeWidth="2" /><circle cx="20" cy="15" r="2.500" stroke="#2b8ad8" strokeWidth="1.700" /></Svg>
);
const WeatherIcon = () => (
  <Svg w={27} h={30}>
    <circle cx="11" cy="18" r="10" fill="#f29a2e" />
    <path d="M9 25q-1-4 4-5 4-4 7 1 5 0 4 4z" fill="#a9d1f0" />
    <circle cx="18" cy="8" r="8" fill="#c4500c" />
    <text x="18" y="12" textAnchor="middle" fontSize="11" fill="#fff" fontFamily="Noto Sans">1</text>
  </Svg>
);

export default function App() {
  return (
    <Screen>
      <GlobalStyle />
      <TitleBar>
        <QuickAccess>
          <button aria-label="Save"><Svg w={14}><path d="M0 0h14v14H0z" fill="#fff" /><path d="M2 1h10v5.500H2zM4 9h7v4H4z" fill="#217346" /><path d="M6 11h2v2H6z" fill="#fff" /></Svg></button>
          <QuickGroup $dim>
            <button aria-label="Undo"><Svg w={15} h={13}><path d="M5 0L1.500 4 5 8M2 4h8q4 0 4 4t-5 5" stroke="#9fd5b7" strokeWidth="2" /></Svg></button>
            <Chev c="#9fd5b7" />
          </QuickGroup>
          <QuickGroup $dim>
            <button aria-label="Redo"><Svg w={15} h={13}><path d="M10 0l3.500 4L10 8M13 4H5Q1 4 1 8t5 5" stroke="#9fd5b7" strokeWidth="2" /></Svg></button>
            <Chev c="#9fd5b7" />
          </QuickGroup>
          <QuickGroup><button aria-label="Borders"><BordersIcon c="#dff0e6" /></button></QuickGroup>
          <QuickGroup><button aria-label="Customize toolbar"><Svg w={7} h={7}><path d="M1 .5h5" stroke="#fff" /><path d="M0 3h7L3.500 6.500z" fill="#fff" /></Svg></button></QuickGroup>
        </QuickAccess>
        <DocTitle>{"Jan schedule .xlsx  -  Excel"}</DocTitle>
        <WindowTools>
          <SignIn>Sign in</SignIn>
          <button aria-label="Ribbon display options"><Svg w={13} h={11}><path d="M.5.5h12v10H.5zM0 2.500h13M6.500 9V4.500M4.500 6.500l2-2 2 2" stroke="#bfe3cf" /></Svg></button>
          <button aria-label="Minimize"><Svg w={11} h={11}><path d="M0 5.500h10" stroke="#bfe3cf" /></Svg></button>
          <button aria-label="Restore"><Svg w={11} h={11}><path d="M.5 2.500h8v8h-8zM2.500 2V1.500q0-1 1-1h5q2 0 2 2v5q0 1-1 1" stroke="#bfe3cf" /></Svg></button>
          <button aria-label="Close"><Svg w={11} h={11}><path d="M.5.5l10 10M10.500.5l-10 10" stroke="#bfe3cf" strokeWidth="1.200" /></Svg></button>
        </WindowTools>
      </TitleBar>

      <TabRow>
        {["File", "Home", "Insert", "Page Layout", "Formulas", "Data", "Review", "View", "Help"].map((t) => (
          <Tab key={t} $active={t === "Home"}><span>{t}</span></Tab>
        ))}
        <TellMe>
          <Svg w={11} h={17}><path d="M3.500 12.500V11Q.5 8.500.5 5.500q0-5 5-5t5 5q0 3-3 5.500v1.500zM3.500 14.500h4M4 16.500h3" stroke="#444" strokeWidth="1.100" /></Svg>
          Tell me what you want to do
        </TellMe>
        <Share><Svg w={11} h={12}><path d="M4 3.500H.5v8h9V8M2.500 8.500q0-4 4-4V2l4 3.500-4 3V6.500q-3 0-4 2z" stroke="#217346" /></Svg>Share</Share>
      </TabRow>

      <RibbonBar />

      <FormulaBar>
        <NameBox $w={102}><input aria-label="Name box" defaultValue="Q4" /><Caret w={7} /></NameBox>
        <Dots $m="0 14px 0 14px"><i /><i /><i /></Dots>
        <FormulaTools>
          <button aria-label="Cancel"><Svg w={11} h={11}><path d="M1 1l9 9M10 1l-9 9" stroke="#c0c0c0" strokeWidth="1.800" /></Svg></button>
          <button aria-label="Enter"><Svg w={13} h={11}><path d="M1 6l3.500 4L12 1" stroke="#c0c0c0" strokeWidth="2.200" /></Svg></button>
          <button aria-label="Insert function"><Svg w={12} h={14}><text x="0" y="11" fontSize="14" fontStyle="italic" fontWeight="700" fill="#555" fontFamily="Liberation Serif">f</text><text x="6" y="12" fontSize="11" fontStyle="italic" fontWeight="700" fill="#555" fontFamily="Liberation Serif">x</text></Svg></button>
        </FormulaTools>
        <FormulaInput><input aria-label="Formula" /><Chev big /></FormulaInput>
      </FormulaBar>

      <SheetArea>
        <SheetView><SheetGrid /></SheetView>
        <VScroll>
          <ScrollBtn aria-label="Scroll up"><Caret dir="up" /></ScrollBtn>
          <VThumb />
          <ScrollBtn aria-label="Scroll down"><Caret /></ScrollBtn>
        </VScroll>
      </SheetArea>

      <SheetTabs>
        <Arrows><Caret dir="left" c="#bbb" w={6} /><Caret dir="right" c="#bbb" w={6} /></Arrows>
        <SheetTab>Sheet1</SheetTab>
        <AddSheet aria-label="New sheet"><Svg w={17}><circle cx="8.500" cy="8.500" r="7.700" stroke="#888" /><path d="M8.500 4.500v8M4.500 8.500h8" stroke="#777" strokeWidth="2" /></Svg></AddSheet>
        <Spacer />
        <Dots $m="0 15px 0 0"><i /><i /><i /></Dots>
        <HScroll>
          <ScrollBtn aria-label="Scroll left"><Caret dir="left" /></ScrollBtn>
          <HThumb />
          <ScrollBtn aria-label="Scroll right"><Caret dir="right" /></ScrollBtn>
        </HScroll>
      </SheetTabs>

      <StatusBar>
        <span>Ready</span>
        <Spacer />
        <ViewBtn $on aria-label="Normal view"><Svg w={13}><path d="M.5.5h12v12H.5zM4.500 0v13M8.500 0v13M0 4.500h13M0 8.500h13" stroke="#444" /></Svg></ViewBtn>
        <ViewBtn aria-label="Page layout view"><Svg w={14} h={13}><path d="M.5.5h13v12H.5zM3.500 2.500h7v8h-7zM5 4.500h4M5 6.500h4M5 8.500h4" stroke="#444" /></Svg></ViewBtn>
        <ViewBtn aria-label="Page break view"><Svg w={14} h={13}><path d="M.5.5h13v12H.5zM4.500 0v7.500h4V0" stroke="#444" /></Svg></ViewBtn>
        <button aria-label="Zoom out"><Svg w={14} h={9}><path d="M6 4.500h8" stroke="#444" /></Svg></button>
        <Zoom type="range" min="0" max="100" defaultValue="40" aria-label="Zoom" />
        <button aria-label="Zoom in"><Svg w={9} h={9}><path d="M0 4.500h8M4.500 0v8" stroke="#444" /></Svg></button>
        <ZoomValue>82%</ZoomValue>
      </StatusBar>

      <Taskbar>
        <Weather><WeatherIcon /><span>62°F<small>Mostly sunny</small></span></Weather>
        <Dock>
          <DockItem aria-label="Start"><WinLogo /></DockItem>
          <SearchBox>
            <Svg w={14} h={15}><circle cx="6" cy="6" r="5" stroke="#222" strokeWidth="1.700" /><path d="M9.500 10l4 4.500" stroke="#222" strokeWidth="1.900" /></Svg>
            <input placeholder="Search" aria-label="Search" />
            <Sheep />
          </SearchBox>
          <DockItem aria-label="Edge"><Edge /></DockItem>
          <DockItem aria-label="Documents"><Papers /></DockItem>
          <DockItem aria-label="Files"><Folder /></DockItem>
          <DockItem aria-label="Chrome"><Chrome /></DockItem>
          <DockItem aria-label="Outlook"><Outlook /></DockItem>
          <DockItem aria-label="Scanner" $running><Barcode /></DockItem>
          <DockItem aria-label="Excel" $running><Excel /></DockItem>
          <DockItem aria-label="Snipping tool" $low><Snip /></DockItem>
        </Dock>
        <Tray>
          <button aria-label="Hidden icons"><Svg w={11} h={7}><path d="M.5 6L5.500 1l5 5" stroke="#222" strokeWidth="1.500" /></Svg></button>
          <TrayIcons>
            <Svg w={17} h={17}><path d="M10.500 1.500H2q-1 0-1 1v9q0 1 1 1h12.500M4 15.500h8M6 13v2M10 13v2M12.500 1.500h3v4h-3zM14.500 6v10" stroke="#222" strokeWidth="1.200" /></Svg>
            <Svg w={17} h={15}><path d="M.5 5.500h3l4-4v12l-4-4h-3zM10 5q1.500 2.500 0 5M12 3.500q3 4 0 8M14 2q4.500 5.500 0 11" stroke="#222" strokeWidth="1.100" /></Svg>
          </TrayIcons>
          <Clock>10:46 AM<br />23/01/2026</Clock>
        </Tray>
      </Taskbar>
      <Watermark aria-hidden="true"><div>مستقل</div><div>mostaql.com</div></Watermark>
    </Screen>
  );
}
